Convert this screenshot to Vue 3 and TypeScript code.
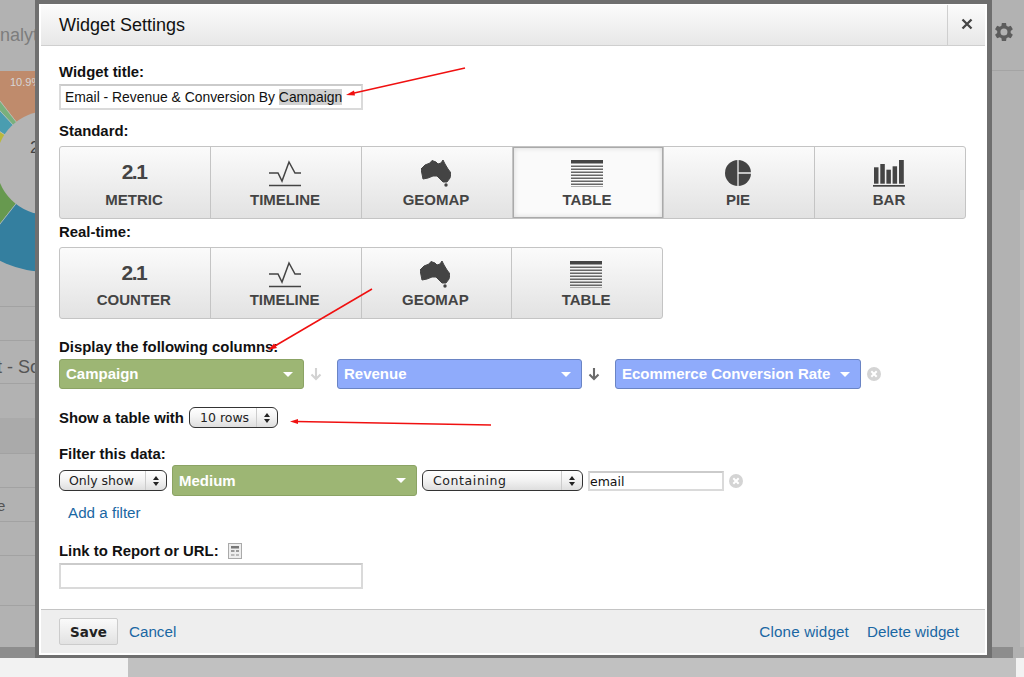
<script setup lang="ts">
type Chart = { icon: string; label: string; active?: boolean };

const standard: Chart[] = [
  { icon: "num", label: "METRIC" },
  { icon: "line", label: "TIMELINE" },
  { icon: "map", label: "GEOMAP" },
  { icon: "table", label: "TABLE", active: true },
  { icon: "pie", label: "PIE" },
  { icon: "bar", label: "BAR" },
];
const realtime: Chart[] = [
  { icon: "num", label: "COUNTER" },
  { icon: "line", label: "TIMELINE" },
  { icon: "map", label: "GEOMAP" },
  { icon: "table", label: "TABLE" },
];
const groups = [
  { title: "Standard:", items: standard, cls: "full" },
  { title: "Real-time:", items: realtime, cls: "part" },
];
const tableRows = [0, 1, 2, 3, 4, 5, 6, 7];
const bgRules = [306, 340, 383, 453, 487, 521, 555, 605];
const australia =
  "M0 9 L4 5 L9 3 L11 0.5 L15 2 L17 4 L20 3 L22 0 L24 4 L27 9 L30 13 L29 18 L26 22 L22 22 L19 19 L16 16 L12 16 L7 18 L2 19 L1 14 Z";
</script>

<template>
  <div class="page">
    <div class="backdrop">
      <svg class="donut" width="36" height="210" viewBox="0 0 36 210">
        <defs>
          <clipPath id="donut-edge"><circle cx="48" cy="92" r="109" /></clipPath>
        </defs>
        <g clip-path="url(#donut-edge)" stroke="#c4c4c4" stroke-width="0.6">
          <path d="M48 92 L48 -100 L-107 -108 Z" fill="#bf8b6c" />
          <path d="M48 92 L-107 -108 L-127 -98 Z" fill="#79b07c" />
          <path d="M48 92 L-127 -98 L-167 -48 Z" fill="#4a9db0" />
          <path d="M48 92 L-167 -48 L-200 92 Z" fill="#b9b83e" />
          <path d="M48 92 L-200 92 L-117 302 Z" fill="#67994f" />
          <path d="M48 92 L-117 302 L48 400 L100 400 Z" fill="#347f9f" />
        </g>
        <circle cx="48" cy="92" r="52" fill="#b4b4b4" />
      </svg>
      <span class="bg-text pct">10.9%</span>
      <span class="bg-text brand">nalyt</span>
      <span class="bg-text hole">2</span>
      <span class="bg-text sub">t - So</span>
      <span class="bg-text one">1</span>
      <span class="bg-text last">e</span>
      <i v-for="y in bgRules" :key="y" class="rule" :style="{ top: y + 'px' }"></i>
      <i class="band"></i>
      <svg class="gear" width="20" height="20" viewBox="3 2 19.5 20">
        <path fill="#5c5c5c" d="M19.4 13a7.6 7.6 0 0 0 0-2l2.2-1.700-2.100-3.600-2.600 1a7.500 7.500 0 0 0-1.700-1L14.800 2.900h-4.200L10.200 5.700a7.500 7.500 0 0 0-1.700 1l-2.600-1-2.100 3.600L6 11a7.600 7.600 0 0 0 0 2l-2.200 1.700 2.100 3.600 2.600-1a7.500 7.500 0 0 0 1.700 1l.4 2.800h4.200l.4-2.800a7.500 7.500 0 0 0 1.700-1l2.600 1 2.100-3.600zM12.700 15.500a3.500 3.500 0 1 1 0-7 3.500 3.500 0 0 1 0 7z" />
      </svg>
      <i class="side-rule"></i>
      <i class="side-track"></i>
      <i class="foot-dark"></i>
      <div class="strip">
        <i class="strip-white"></i>
        <i class="strip-end"></i>
      </div>
    </div>

    <div class="modal">
      <header class="head">
        <h1>Widget Settings</h1>
        <button class="close" type="button" aria-label="Close">
          <svg width="12" height="12" viewBox="0 0 12 12">
            <path d="M1.500 1.500 L10.500 10.500 M10.500 1.500 L1.500 10.500" stroke="#444" stroke-width="2.300" />
          </svg>
        </button>
      </header>

      <div class="body">
        <label class="lbl first">Widget title:</label>
        <div class="field title-field">
          Email - Revenue &amp; Conversion By <span class="sel">Campaign</span>
        </div>

        <template v-for="g in groups" :key="g.title">
          <label class="lbl group-lbl">{{ g.title }}</label>
          <div class="charts" :class="g.cls">
            <div v-for="c in g.items" :key="c.label" class="chart" :class="{ active: c.active }">
              <div class="glyph">
                <span v-if="c.icon === 'num'" class="num">2.1</span>
                <svg v-else-if="c.icon === 'line'" width="34" height="27" viewBox="0 0 34 27">
                  <path d="M1 13 H10 L14 21 L21 2 L27 13 H33" fill="none" stroke="#444" stroke-width="1.500" />
                  <path d="M1 25.500 H33" stroke="#444" stroke-width="1.500" />
                </svg>
                <svg v-else-if="c.icon === 'map'" width="30" height="27" viewBox="0 0 30 27">
                  <path :d="australia" fill="#444" stroke="#444" stroke-linejoin="round" />
                  <circle cx="25" cy="25" r="1.700" fill="#444" />
                </svg>
                <svg v-else-if="c.icon === 'table'" width="32" height="27" viewBox="0 0 32 27">
                  <rect x="0" y="0" width="32" height="3.500" fill="#444" />
                  <rect v-for="r in tableRows" :key="r" x="0" :y="5.500 + r * 3" width="32" height="1.500" fill="#666" />
                </svg>
                <svg v-else-if="c.icon === 'pie'" width="26" height="26" viewBox="0 0 26 26">
                  <circle cx="13" cy="13" r="13" fill="#444" />
                  <path d="M13 0 V26 M13 13 H26" stroke="#eee" stroke-width="1.300" />
                </svg>
                <svg v-else width="32" height="27" viewBox="0 0 32 27">
                  <rect x="1" y="7.300" width="4.500" height="16.400" fill="#444" />
                  <rect x="7.300" y="4" width="4.500" height="19.700" fill="#444" />
                  <rect x="13.400" y="9.700" width="4.500" height="14" fill="#444" />
                  <rect x="19.600" y="6.300" width="4.500" height="17.400" fill="#444" />
                  <rect x="26" y="0" width="4.800" height="23.700" fill="#444" />
                  <rect x="0" y="25" width="32" height="1.700" fill="#444" />
                </svg>
              </div>
              <span class="chart-name">{{ c.label }}</span>
            </div>
          </div>
        </template>

        <label class="lbl columns-lbl">Display the following columns:</label>
        <div class="row">
          <div class="pill green">Campaign<i class="caret"></i></div>
          <span class="sort muted">
            <svg width="12" height="14" viewBox="0 0 12 14">
              <path d="M6 1 V12 M1.500 7.500 L6 12 L10.500 7.500" fill="none" stroke="currentColor" stroke-width="2.100" />
            </svg>
          </span>
          <div class="pill blue">Revenue<i class="caret"></i></div>
          <span class="sort">
            <svg width="12" height="14" viewBox="0 0 12 14">
              <path d="M6 1 V12 M1.500 7.500 L6 12 L10.500 7.500" fill="none" stroke="currentColor" stroke-width="2.100" />
            </svg>
          </span>
          <div class="pill blue wide">Ecommerce Conversion Rate<i class="caret"></i></div>
          <svg class="remove" width="14" height="14" viewBox="0 0 14 14">
            <circle cx="7" cy="7" r="7" fill="#d4d4d4" />
            <path d="M4.300 4.300 L9.700 9.700 M9.700 4.300 L4.300 9.700" stroke="#fff" stroke-width="2" />
          </svg>
        </div>

        <div class="row show-row">
          <label class="lbl inline">Show a table with</label>
          <div class="native rows-select">10 rows<span class="spin"><b></b><b class="down"></b></span></div>
        </div>

        <label class="lbl filter-lbl">Filter this data:</label>
        <div class="row filter-row">
          <div class="native only">Only show<span class="spin"><b></b><b class="down"></b></span></div>
          <div class="pill green">Medium<i class="caret"></i></div>
          <div class="native containing">Containing<span class="spin"><b></b><b class="down"></b></span></div>
          <div class="field email">email</div>
          <svg class="remove" width="14" height="14" viewBox="0 0 14 14">
            <circle cx="7" cy="7" r="7" fill="#d4d4d4" />
            <path d="M4.300 4.300 L9.700 9.700 M9.700 4.300 L4.300 9.700" stroke="#fff" stroke-width="2" />
          </svg>
        </div>
        <a class="link add">Add a filter</a>

        <label class="lbl link-lbl">
          Link to Report or URL:
          <svg class="report" width="14" height="16" viewBox="0 0 14 16">
            <rect x="0.500" y="0.500" width="13" height="15" fill="#eee" stroke="#aaa" />
            <rect x="3" y="3" width="8" height="2.500" fill="#777" />
            <rect x="3" y="7" width="3.500" height="2" fill="#999" />
            <rect x="8" y="7" width="3" height="2" fill="#999" />
            <rect x="3" y="11" width="3.500" height="2" fill="#bbb" />
            <rect x="8" y="11" width="3" height="2" fill="#bbb" />
          </svg>
        </label>
        <div class="field"></div>
      </div>

      <footer class="foot">
        <button class="save" type="button">Save</button>
        <a class="link cancel">Cancel</a>
        <a class="link clone">Clone widget</a>
        <a class="link">Delete widget</a>
      </footer>
    </div>

    <svg class="arrows" width="1024" height="677" viewBox="0 0 1024 677">
      <path d="M465 68 L352 93.500" stroke="#f01010" stroke-width="1.500" />
      <path d="M346 95 L354 90.500 L355 95.500 Z" fill="#f01010" />
      <path d="M372 289 L274 346.500" stroke="#f01010" stroke-width="1.500" />
      <path d="M268 350 L274 343.500 L277 348 Z" fill="#f01010" />
      <path d="M491 425 L296 421.500" stroke="#f01010" stroke-width="1.500" />
      <path d="M290 421.500 L298 419 L298 424 Z" fill="#f01010" />
    </svg>
  </div>
</template>

<style>
html,
body {
  margin: 0;
  overflow: hidden;
}
</style>

<style scoped>
.page {
  position: relative;
  width: 1024px;
  height: 677px;
  overflow: hidden;
  font-family: "Liberation Sans", Arial, sans-serif;
}

.backdrop {
  position: absolute;
  inset: 0;
  background: #b2b2b2;
}
.donut {
  position: absolute;
  left: 0;
  top: 71px;
}
.bg-text {
  position: absolute;
  color: #7d7d7d;
  font-size: 18px;
  line-height: 24px;
  white-space: nowrap;
}
.pct {
  left: 10px;
  top: 76px;
  font-size: 11px;
  line-height: 12px;
  color: #d6d6d6;
}
.brand {
  left: 0;
  top: 23px;
}
.hole {
  left: 30px;
  top: 136px;
  color: #444;
  font-size: 17px;
}
.sub {
  left: 0;
  top: 355px;
  color: #555;
  text-indent: -3px;
}
.one {
  left: 29px;
  top: 426px;
  font-size: 15px;
  color: #555;
}
.last {
  left: 0;
  top: 494px;
  font-size: 15px;
  color: #555;
  text-indent: -3px;
}
.rule {
  position: absolute;
  left: 0;
  width: 36px;
  height: 1px;
  background: #a2a2a2;
}
.band {
  position: absolute;
  left: 0;
  top: 418px;
  width: 36px;
  height: 35px;
  background: #aaa;
}
.gear {
  position: absolute;
  left: 994px;
  top: 22px;
}
.side-rule {
  position: absolute;
  left: 992px;
  top: 70px;
  width: 32px;
  height: 1px;
  background: #a4a4a4;
}
.side-track {
  position: absolute;
  left: 1020px;
  top: 190px;
  width: 4px;
  height: 457px;
  background: #bcbcbc;
}
.foot-dark {
  position: absolute;
  left: 0;
  right: 11px;
  top: 647px;
  height: 11px;
  background: #8d8d8d;
}
.strip {
  position: absolute;
  left: 0;
  right: 0;
  top: 658px;
  height: 19px;
  background: #c1c1c1;
}
.strip-white {
  position: absolute;
  left: 0;
  top: 0;
  width: 128px;
  height: 19px;
  background: #f2f2f2;
}
.strip-end {
  position: absolute;
  right: 0;
  top: 0;
  width: 8px;
  height: 19px;
  background: #f2f2f2;
}

.modal {
  position: absolute;
  left: 35px;
  top: 0;
  width: 944px;
  height: 648px;
  border: solid #6f6f6f;
  border-width: 4px 5px 3px 4px;
  background: #fff;
  padding: 1px 2px 2px 2px;
  display: flex;
  flex-direction: column;
  color: #111;
}
.head {
  height: 41px;
  flex: none;
  display: flex;
  align-items: stretch;
  justify-content: space-between;
  box-sizing: border-box;
  border-bottom: 1px solid #cfcfcf;
  background: linear-gradient(#fbfbfb, #e7e7e7);
}
.head h1 {
  margin: 0;
  padding-left: 18px;
  font-size: 18px;
  font-weight: 400;
  line-height: 41px;
}
.close {
  width: 38px;
  padding: 0;
  border: 0;
  border-left: 1px solid #cfcfcf;
  background: none;
}

.body {
  flex: 1;
  padding: 18px 0 0 18px;
}
.lbl {
  display: block;
  font-size: 14.9px;
  font-weight: 700;
  line-height: 16px;
  height: 16px;
}
.field {
  width: 304px;
  height: 26px;
  margin-top: 4px;
  box-sizing: border-box;
  border: 2px solid #dadada;
  border-top-color: #cbcbcb;
  background: #fff;
  font-size: 13.9px;
  line-height: 22px;
  padding-left: 4px;
  white-space: nowrap;
}
.sel {
  background: #d0d0d0;
}
.group-lbl {
  margin-top: 13px;
}
.charts + .group-lbl {
  margin-top: 5px;
}
.charts {
  display: flex;
  height: 73px;
  margin-top: 7px;
  box-sizing: border-box;
  border: 1px solid #c4c4c4;
  border-radius: 3px;
  background: linear-gradient(#fbfbfb, #e2e2e2);
}
.charts.full {
  width: 907px;
}
.charts.part {
  width: 604px;
  height: 72px;
}
.chart {
  flex: 1;
  display: flex;
  flex-direction: column;
  align-items: center;
  box-sizing: border-box;
  padding-right: 2px;
  border-right: 1px solid #c4c4c4;
}
.chart:last-child {
  border-right: 0;
}
.chart.active {
  background: #fafafa;
  box-shadow: inset 0 0 0 1px #aaa, inset 0 0 4px 2px rgba(0, 0, 0, 0.1);
}
.glyph {
  height: 31px;
  margin-top: 13px;
  display: flex;
  align-items: flex-start;
  justify-content: center;
}
.num {
  font-size: 21px;
  font-weight: 700;
  line-height: 24px;
  letter-spacing: -1.5px;
  color: #444;
}
.chart-name {
  font-size: 15px;
  font-weight: 700;
  line-height: 18px;
  color: #444;
}
.part .chart-name {
  margin-top: -1px;
}

.columns-lbl {
  margin-top: 20px;
}
.row {
  display: flex;
  align-items: center;
  margin-top: 4px;
}
.pill {
  flex: none;
  position: relative;
  width: 245px;
  height: 30px;
  box-sizing: border-box;
  border-radius: 3px;
  border: 1px solid;
  padding-left: 6px;
  color: #fff;
  font-size: 15px;
  font-weight: 700;
  line-height: 28px;
  white-space: nowrap;
}
.pill.wide {
  width: 246px;
}
.green {
  background: #9db674;
  border-color: #8ba364;
}
.blue {
  background: #8fabfb;
  border-color: #6a84c4;
}
.caret {
  position: absolute;
  right: 10px;
  top: 12px;
  border: 5px solid transparent;
  border-top-color: #fff;
  border-bottom: 0;
}
.sort {
  width: 33px;
  flex: none;
  box-sizing: border-box;
  padding-left: 6px;
  height: 14px;
  color: #6a6a6a;
  display: flex;
}
.sort.muted {
  color: #d2d2d2;
}
.remove {
  flex: none;
  margin-left: 6px;
}
.filter-row .remove {
  margin-left: 5px;
}

.show-row {
  margin-top: 18px;
  height: 21px;
}
.inline {
  width: 130px;
}
.native {
  flex: none;
  position: relative;
  height: 21px;
  box-sizing: border-box;
  border: 1px solid #333;
  border-radius: 6px;
  background: linear-gradient(#fff, #f4f4f4 45%, #dedede);
  font-family: "DejaVu Sans", sans-serif;
  font-size: 12.5px;
  line-height: 19px;
  color: #222;
  padding-left: 9px;
}
.rows-select {
  width: 89px;
  padding-left: 10px;
}
.only {
  width: 108px;
  margin-right: 5px;
}
.containing {
  width: 161px;
  margin: 0 5px;
  padding-left: 10px;
  letter-spacing: 0.6px;
}
.spin {
  position: absolute;
  right: 0;
  top: 0;
  bottom: 0;
  width: 20px;
  border-left: 1px solid #ccc;
  display: flex;
  flex-direction: column;
  align-items: center;
  justify-content: center;
  gap: 2px;
}
.spin b {
  border: 3.5px solid transparent;
  border-bottom: 4px solid #222;
  border-top: 0;
}
.spin b.down {
  border-bottom: 0;
  border-top: 4px solid #222;
}

.filter-lbl {
  margin-top: 18px;
}
.filter-row {
  margin-top: 3px;
  height: 31px;
}
.filter-row .pill {
  height: 31px;
  line-height: 29px;
}
.email {
  width: 136px;
  height: 20px;
  margin-top: 0;
  font-family: "DejaVu Sans", sans-serif;
  font-size: 12.5px;
  line-height: 17px;
  padding-left: 0;
}

.link {
  color: #1a67a3;
  font-size: 15.2px;
  line-height: 16px;
}
.add {
  display: block;
  margin: 9px 0 0 9px;
  height: 16px;
}
.link-lbl {
  margin-top: 22px;
}
.report {
  vertical-align: -3px;
  margin-left: 5px;
}

.foot {
  height: 44px;
  flex: none;
  box-sizing: border-box;
  border-top: 1px solid #c4c4c4;
  background: #eee;
  display: flex;
  align-items: center;
  padding: 0 26px 0 18px;
  gap: 18px;
}
.save {
  width: 59px;
  height: 27px;
  box-sizing: border-box;
  border: 1px solid #ccc;
  border-radius: 2px;
  background: linear-gradient(#fafafa, #e2e2e2);
  font-family: "DejaVu Sans", sans-serif;
  font-size: 13.5px;
  font-weight: 700;
  color: #222;
}
.cancel {
  margin-left: -7px;
  margin-right: auto;
}
.clone {
  letter-spacing: 0.15px;
}
.arrows {
  position: absolute;
  left: 0;
  top: 0;
  pointer-events: none;
}
</style>
